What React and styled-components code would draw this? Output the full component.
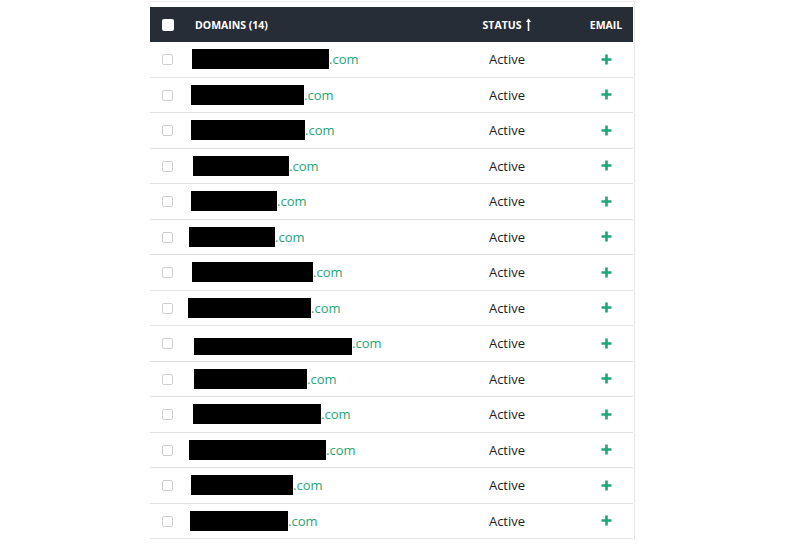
import React from 'react'
import styled, { createGlobalStyle } from 'styled-components'

const Global = createGlobalStyle`
  html, body { margin: 0; padding: 0; background: #fff; }
  body { font-family: "Open Sans", "Noto Sans", sans-serif; }
`

const Page = styled.div`
  width: 800px;
  height: 547px;
  overflow: hidden;
  padding-left: 150px;
  box-sizing: border-box;
`

const Frame = styled.div`
  width: 485px;
  margin-top: 1px;
  padding-top: 5px;
  padding-right: 2px;
  box-sizing: border-box;
  border-top: 1px solid #ececec;
  border-right: 1px solid #e6e6e6;
`

const Table = styled.div`
  width: 483px;
`

const Row = styled.div`
  display: grid;
  grid-template-columns: 42px 1fr 110px 71px;
  align-items: center;
  height: ${p => (p.$head ? '35px' : '34.5px')};
  background: ${p => (p.$head ? '#272d37' : '#fff')};
  border-bottom: ${p => (p.$head ? 'none' : '1px solid #e1e1e1')};
`

const CheckCell = styled.div`
  display: flex;
  padding-left: 12px;
`

const Box = styled.span`
  display: block;
  width: ${p => (p.$head ? '12px' : '11px')};
  height: ${p => (p.$head ? '12px' : '11px')};
  box-sizing: border-box;
  border-radius: 2px;
  background: #fff;
  border: ${p => (p.$head ? 'none' : '1px solid #cfcfcf')};
  margin-top: ${p => (p.$head ? '0' : '1px')};
`

const HeadText = styled.div`
  display: flex;
  align-items: center;
  justify-content: ${p => p.$justify || 'flex-start'};
  gap: 5px;
  color: #fff;
  font-size: 10.5px;
  font-weight: 700;
  text-transform: uppercase;
  padding-left: ${p => p.$pad || '0'};
`

const Domain = styled.div`
  display: flex;
  align-items: center;
  font-size: 13px;
  color: #1fa577;
  margin-left: ${p => p.$shift}px;
`

const Redacted = styled.span`
  display: inline-block;
  width: ${p => p.$w}px;
  height: ${p => p.$h || 20}px;
  background: #000;
  margin-top: ${p => p.$drop || 0}px;
`

const Status = styled.div`
  text-align: center;
  font-size: 13px;
  color: #1c1c1c;
`

const EmailCell = styled.div`
  display: flex;
  justify-content: center;
  padding-left: 17px;
`

const Plus = () => (
  <svg width="11" height="11" viewBox="0 0 11 11">
    <path d="M5.5 0.5v10M0.5 5.5h10" stroke="#1fa577" strokeWidth="2.6" />
  </svg>
)

const SortArrow = () => (
  <svg width="5" height="13" viewBox="0 0 5 13">
    <path d="M2.5 1.5V13" stroke="#fff" strokeWidth="1.6" />
    <path d="M0 4L2.5 0.5L5 4Z" fill="#fff" />
  </svg>
)

const rows = [
  { shift: 0, w: 137 },
  { shift: -1, w: 113 },
  { shift: -1, w: 114 },
  { shift: 1, w: 96 },
  { shift: -1, w: 86 },
  { shift: -3, w: 86 },
  { shift: 0, w: 121 },
  { shift: -4, w: 123 },
  { shift: 2, w: 158, h: 17, drop: 6 },
  { shift: 2, w: 113 },
  { shift: 1, w: 128 },
  { shift: -3, w: 137 },
  { shift: -1, w: 102 },
  { shift: -2, w: 98 },
]

export default function App() {
  return (
    <Page>
      <Global />
      <Frame>
        <Table>
          <Row $head>
            <CheckCell>
              <Box $head />
            </CheckCell>
            <HeadText $pad="3px">Domains (14)</HeadText>
            <HeadText $justify="center">
              Status
              <SortArrow />
            </HeadText>
            <HeadText $justify="center" $pad="17px">Email</HeadText>
          </Row>
          {rows.map((r, i) => (
            <Row key={i}>
              <CheckCell>
                <Box />
              </CheckCell>
              <Domain $shift={r.shift}>
                <Redacted $w={r.w} $h={r.h} $drop={r.drop} />
                .com
              </Domain>
              <Status>Active</Status>
              <EmailCell>
                <Plus />
              </EmailCell>
            </Row>
          ))}
        </Table>
      </Frame>
    </Page>
  )
}
